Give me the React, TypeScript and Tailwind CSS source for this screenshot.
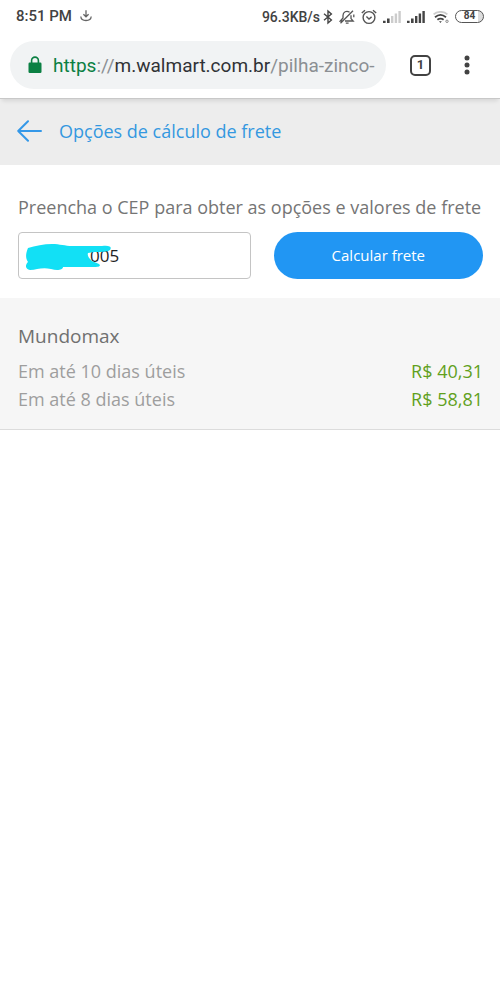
import { useState } from "react";

function StatusBar() {
  return (
    <div className="flex h-8 items-center justify-between px-4 pt-px font-[Roboto,sans-serif] text-sm font-medium text-[#424242]">
      <div className="flex items-center gap-2">
        <span className="text-[15px]">8:51 PM</span>
        <svg className="h-3 w-3" viewBox="0 0 12 12" fill="none" stroke="#666" strokeWidth="1.3" aria-hidden="true">
          <path d="M6 .3v6M3.4 4.2 6 6.8l2.6-2.6M.8 6.5c.2 2.6 2.4 4 5.2 4s5-1.4 5.2-4" />
        </svg>
      </div>
      <div className="flex items-center gap-[6px]">
        <div className="flex items-center gap-[3px]">
          <span>96.3KB/s</span>
          <svg className="h-4 w-[10px]" viewBox="0 0 10 16" fill="none" stroke="#444" strokeWidth="1.4" aria-hidden="true">
            <path d="m1 4.7 7.4 6.3L5 14V2l3.4 3L1 11.3" />
          </svg>
        </div>
        <svg className="h-4 w-4" viewBox="0 0 16 16" fill="none" stroke="#555" strokeWidth="1.3" aria-hidden="true">
          <path d="M6 12h8.2L12 9.6V6.2M10.6 3.2C7.4 1.2 4 3 4 6.4V9l-2.6 3h2M6.8 14.2h2.8M1.5 14.2 14 1.8M14.8 5.5v2.8" />
        </svg>
        <svg className="h-4 w-4" viewBox="0 0 16 16" fill="none" stroke="#555" strokeWidth="1.4" aria-hidden="true">
          <circle cx="8" cy="8.5" r="5.9" />
          <path d="M.8 4 4 1.2M15.2 4 12 1.2M5.4 7.6 8 10l2.6-2.1" />
        </svg>
        <svg className="h-3 w-[18px]" viewBox="0 0 18 12" aria-hidden="true">
          <path fill="#444" d="M0 9.8h2.6V12H0zM4 7.5h2.6V12H4z" />
          <path fill="#ccc" d="M8 5h2.4v7H8zM11.7 2.5h2.4V12h-2.4zM15.4 0h2.4v12h-2.4z" />
        </svg>
        <svg className="h-3 w-[18px]" viewBox="0 0 18 12" aria-hidden="true">
          <path fill="#444" d="M0 9.8h2.6V12H0zM4 7.5h2.6V12H4zM8 5h2.4v7H8zM11.7 2.5h2.4V12h-2.4zM15.4 0h2.4v12h-2.4z" />
        </svg>
        <svg className="ml-[2px] h-3 w-4" viewBox="0 0 16 12" fill="none" strokeWidth="1.8" aria-hidden="true">
          <path stroke="#ccc" d="M.6 3.4c4-3.4 10-3.4 13.8 0" />
          <path stroke="#444" d="M2 6.2c3.4-2.8 7.6-2.8 11 0M4.4 8.8c2-1.6 4.2-1.6 6.2 0" />
          <path fill="#444" d="M6 10.3h2.8L7.4 11.9z" />
          <circle cx="14" cy="10.3" r="1.2" stroke="#888" strokeWidth="1" />
        </svg>
        <span className="flex h-[13px] w-[29px] items-center justify-center rounded-full border border-[#555] bg-gradient-to-r from-white from-80% to-[#ddd] to-80% text-[10px] font-bold">
          84
        </span>
      </div>
    </div>
  );
}

function BrowserBar() {
  return (
    <div className="relative flex h-[67px] items-center border-b border-[#c8c8c8] bg-white pl-[10px] pr-[26px] font-[Roboto,sans-serif] shadow-[0_4px_4px_-2px_rgba(0,0,0,0.1)]">
      <div className="flex h-12 min-w-0 flex-1 items-center rounded-full bg-[#f1f3f4] pl-[18px]">
        <svg className="h-[18px] w-[14px] shrink-0" viewBox="0 0 14 18" aria-hidden="true">
          <rect x="0.5" y="6.5" width="13" height="10.5" rx="1.2" fill="#0b8043" />
          <path d="M3.6 7V4.5a3.4 3.4 0 0 1 6.8 0V7" fill="none" stroke="#0b8043" strokeWidth="1.6" />
        </svg>
        <span className="ml-[11px] pt-[2px] whitespace-nowrap text-[19px] text-[#8b8f93]">
          <span className="text-[#0b8043]">https</span>://<span className="text-[#303236]">m.walmart.com.br</span>/pilha-zinco-
        </span>
      </div>
      <button
        type="button"
        aria-label="Abas abertas"
        className="ml-6 flex h-[21px] w-[21px] items-center justify-center rounded-[5px] border-2 border-[#424242] text-[13px] font-bold text-[#424242]"
      >
        1
      </button>
      <button type="button" aria-label="Mais opções" className="ml-[29px] flex h-6 w-[14px] items-center justify-center">
        <svg className="h-5 w-[6px]" viewBox="0 0 6 20" fill="#424242" aria-hidden="true">
          <circle cx="3" cy="3" r="2.5" />
          <circle cx="3" cy="10" r="2.5" />
          <circle cx="3" cy="17" r="2.5" />
        </svg>
      </button>
    </div>
  );
}

const options = [
  { term: "Em até 10 dias úteis", price: "R$ 40,31" },
  { term: "Em até 8 dias úteis", price: "R$ 58,81" },
];

export default function App() {
  const [cep, setCep] = useState("005");
  return (
    <div className="min-h-screen bg-white font-['Open_Sans',sans-serif]">
      <StatusBar />
      <BrowserBar />
      <header className="flex h-[66px] items-center bg-[#ededed] px-[17px] pb-[2px]">
        <a href="#voltar" aria-label="Voltar">
          <svg className="h-[22px] w-[25px]" viewBox="0 0 25 22" fill="none" stroke="#3498e8" strokeWidth="2" strokeLinecap="round" strokeLinejoin="round" aria-hidden="true">
            <path d="M24 11H1.2M11 1.2 1.2 11l9.8 9.8" />
          </svg>
        </a>
        <h1 className="ml-[17px] text-lg text-[#3498e0]">Opções de cálculo de frete</h1>
      </header>
      <main>
        <form className="pb-[19px] pl-[18px] pr-[17px] pt-7" onSubmit={(e) => e.preventDefault()}>
          <label htmlFor="cep" className="block whitespace-nowrap text-lg text-[#757575]">
            Preencha o CEP para obter as opções e valores de frete
          </label>
          <div className="mt-[11px] flex gap-[23px]">
            <div className="relative flex-[10]">
              <input
                id="cep"
                value={cep}
                onChange={(e) => setCep(e.target.value)}
                className="h-[47px] w-full rounded-[4px] border border-[#c4c4c4] bg-white pl-[71px] text-[17px] text-[#222] outline-none"
              />
              <svg className="pointer-events-none absolute left-2 top-[11px] h-[29px] w-[86px]" viewBox="0 0 86 29" aria-hidden="true">
                <path
                  fill="#12e0f5"
                  d="M2 5C9 3 18 1 26 1c8 0 13 2 20 2h30c8-1 10 1 8 4-4 3-14 1-22 3-1 3 1 5 4 8l7 3c3 3-2 3-8 3H37c0 3-6 4-12 2-10-2-14 1-21 1-5-1-5-5-2-8-3-4-2-9 0-14z"
                />
              </svg>
            </div>
            <button type="submit" className="h-[47px] flex-[9] rounded-full bg-[#2196f3] text-[15px] text-white">
              Calcular frete
            </button>
          </div>
        </form>
        <section className="border-b border-[#dcdcdc] bg-[#f6f6f6] pb-4 pl-[18px] pr-[17px] pt-6">
          <h2 className="text-[19px] leading-7 text-[#707070]">Mundomax</h2>
          <ul className="mt-[7px]">
            {options.map((option) => (
              <li key={option.term} className="flex justify-between text-lg leading-7">
                <span className="text-[#9e9e9e]">{option.term}</span>
                <span className="text-[#61a01c]">{option.price}</span>
              </li>
            ))}
          </ul>
        </section>
      </main>
    </div>
  );
}
